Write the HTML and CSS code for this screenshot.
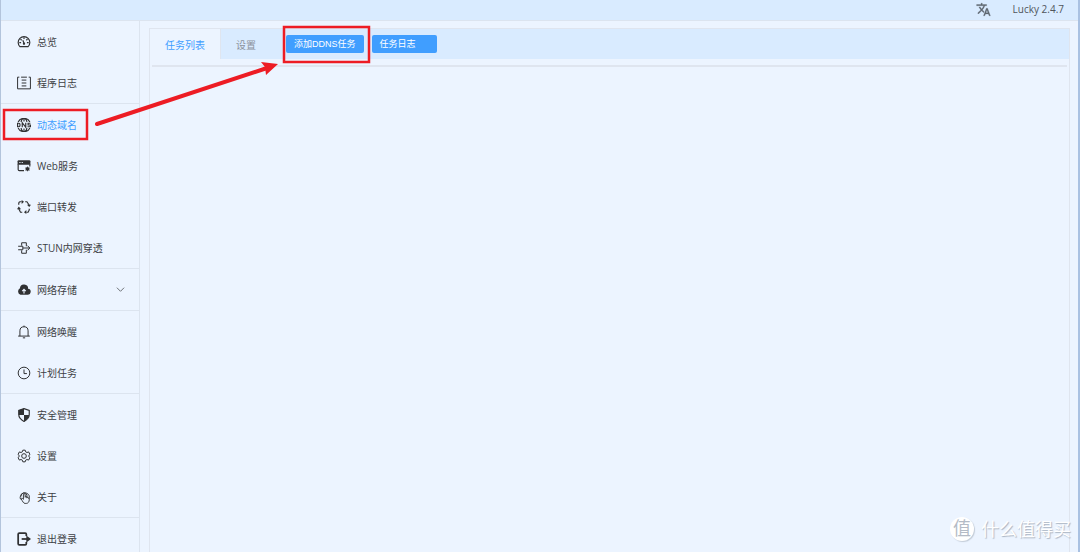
FILE: index.html
```html
<!DOCTYPE html>
<html lang="zh-CN">
<head>
    <meta charset="UTF-8">
    <meta name="viewport" content="width=device-width, initial-scale=1.0">
    <title>Lucky</title>
    <link rel="stylesheet" href="styles.css">
</head>
<body>
    <header class="topbar">
        <button class="lang-btn" type="button" aria-label="语言">
            <svg class="lang-icon" viewBox="0 0 24 24" fill="currentColor" stroke="currentColor" stroke-width=".5"><path d="M12.9 15.1l-2.6-2.5c1.8-1.9 3-4.2 3.8-6.6H17V4h-7V2H8v2H1v2h11.2c-.7 1.9-1.8 3.8-3.2 5.3-.9-1-1.7-2.1-2.3-3.3h-2c.7 1.6 1.7 3.2 3 4.6l-5.1 5L4 19l5-5 3.1 3.1.8-2zM18.5 10h-2L12 22h2l1.1-3h4.8l1.1 3h2l-4.5-12zm-2.6 7l1.6-4.3 1.6 4.3h-3.2z"/></svg>
        </button>
        <span class="version">Lucky 2.4.7</span>
    </header>

    <div class="layout">
        <nav class="sidebar">
            <ul class="menu">
                <li><a class="menu-item" href="#home">
                    <svg class="icon" viewBox="0 0 24 24" fill="none" stroke="currentColor" stroke-width="2"><path d="M5 20a10 10 0 1 1 14 0z"/><path d="M12 4v3M4 13h3M17 13h3M6 7l2 2M18 7l-2 2M10 9l2 5"/><circle cx="12" cy="15" r="1"/></svg>
                    总览</a></li>
                <li><a class="menu-item" href="#log">
                    <svg class="icon" viewBox="0 0 24 24" fill="none" stroke="currentColor" stroke-width="1.7"><path d="M4 2H1v20h22V2h-3"/><path d="M7 2h10M8 7h8M8 12h8M8 17h8"/></svg>
                    程序日志</a></li>
            </ul>
            <ul class="menu">
                <li><a class="menu-item active" href="#ddns">
                    <svg class="icon" viewBox="0 0 24 24" fill="none" stroke="currentColor" stroke-width="2"><path d="M2 7a11 11 0 0 1 20 0M2 17a11 11 0 0 0 20 0M12 1v5M12 18v5M7 7c0-2 1-4 3-6M17 7c0-2-1-4-3-6M7 17c0 2 1 4 3 6M17 17c0 2-1 4-3 6"/><path d="M1 9v6h2c3 0 3-6 0-6zM9 16V8l6 8V8M23 9h-4v3h4v3h-5"/></svg>
                    动态域名</a></li>
                <li><a class="menu-item" href="#web">
                    <svg class="icon" viewBox="0 0 24 24" fill="none" stroke="currentColor" stroke-width="2"><path d="M3 2h18a2 2 0 0 1 2 2v6H1V4a2 2 0 0 1 2-2z" fill="currentColor" stroke="none"/><path d="M2 9v9a2 2 0 0 0 2 2h8M22 9v4"/><path d="M4 6h2M8 6h2" stroke="#ecf4ff"/><circle cx="18" cy="17" r="3" fill="currentColor" stroke="none"/><path d="M18 13v8M14 17h8M15 14l6 6M21 14l-6 6" stroke-width="1.5"/></svg>
                    Web服务</a></li>
                <li><a class="menu-item" href="#forward">
                    <svg class="icon" viewBox="0 0 24 24" fill="none" stroke="currentColor" stroke-width="2"><path d="M8 3H5a3 3 0 0 0-2 3v2M14 3h3l4 6M21 15v2l-2 4h-3M9 21H6l-3-6"/><path d="M8 0l4 3-4 4zM17 8h7l-3 4zM16 17v7l-4-3zM0 16h7l-4-5z" fill="currentColor" stroke="none"/></svg>
                    端口转发</a></li>
                <li><a class="menu-item" href="#stun">
                    <svg class="icon" viewBox="0 0 24 24" fill="none" stroke="currentColor" stroke-width="1.7"><path d="M8 8V3h8v6M8 16v5h8v-6M2 9h8v6H2M10 12h12M18 8l4 4-4 4"/></svg>
                    STUN内网穿透</a></li>
            </ul>
            <ul class="menu">
                <li><a class="menu-item" href="#storage">
                    <svg class="icon" viewBox="0 0 24 24"><path d="M19 10A7 7 0 0 0 5 9a6 6 0 0 0 1 11h12a5 5 0 0 0 1-10z" fill="currentColor"/><path d="M12 18v-6M9 14l3-3 3 3" fill="none" stroke="#ecf4ff" stroke-width="2"/></svg>
                    网络存储
                    <svg class="chevron" viewBox="0 0 10 10" fill="none" stroke="currentColor"><path d="M1 3l4 4 4-4"/></svg></a></li>
            </ul>
            <ul class="menu">
                <li><a class="menu-item" href="#wol">
                    <svg class="icon" viewBox="0 0 24 24" fill="none" stroke="currentColor" stroke-width="1.7"><path d="M5 19v-9a7 7 0 0 1 14 0v9M2 19h20M12 1v2M10 22h4"/></svg>
                    网络唤醒</a></li>
                <li><a class="menu-item" href="#cron">
                    <svg class="icon" viewBox="0 0 24 24" fill="none" stroke="currentColor" stroke-width="1.7"><circle cx="12" cy="12" r="10"/><path d="M12 6v7h5"/></svg>
                    计划任务</a></li>
            </ul>
            <ul class="menu">
                <li><a class="menu-item" href="#security">
                    <svg class="icon" viewBox="0 0 24 24"><path d="M12 1l9 3v7c0 6-4 9-9 12-5-3-9-6-9-12V4z" fill="none" stroke="currentColor" stroke-width="2"/><path d="M12 1v11H3V4zM12 12h9c-1 5-4 8-9 11z" fill="currentColor"/></svg>
                    安全管理</a></li>
                <li><a class="menu-item" href="#settings">
                    <svg class="icon" viewBox="0 0 24 24" fill="none" stroke="currentColor" stroke-width="1.7"><path d="M10 2h4l1 3 2 1 3-1 2 4-2 3 2 3-2 4-3-1-2 1-1 3h-4l-1-3-2-1-3 1-2-4 2-3-2-3 2-4 3 1 2-1z"/><circle cx="12" cy="12" r="4"/></svg>
                    设置</a></li>
                <li><a class="menu-item" href="#about">
                    <svg class="icon" viewBox="0 0 24 24" fill="none" stroke="currentColor" stroke-width="1.6"><path d="M6 16a8 8 0 1 1 15-6v7c0 3-2 6-5 6h-2c-3 0-4-3-7-8 1-2 2-1 4 1V8c0-2 3-2 3 0v5"/><path d="M7 11a5 5 0 1 1 10-2v5M14 11c2-1 3 0 3 2 2-1 3 0 3 2"/></svg>
                    关于</a></li>
            </ul>
            <ul class="menu">
                <li><a class="menu-item" href="#logout">
                    <svg class="icon" viewBox="0 0 24 24" fill="none" stroke="currentColor" stroke-width="3"><path d="M16 7V4a2 2 0 0 0-2-2H4a2 2 0 0 0-2 2v16a2 2 0 0 0 2 2h10a2 2 0 0 0 2-2v-3"/><path d="M8 12h10"/><path d="M16 6l8 6-8 6z" fill="currentColor" stroke="none"/></svg>
                    退出登录</a></li>
            </ul>
        </nav>

        <main class="content">
            <section class="card">
                <div class="tabs">
                    <button class="tab selected" type="button">任务列表</button>
                    <button class="tab" type="button">设置</button>
                    <div class="actions">
                        <button class="btn" type="button">添加DDNS任务</button>
                        <button class="btn btn-log" type="button">任务日志</button>
                    </div>
                </div>
                <hr class="rule">
            </section>
        </main>
    </div>

    <!-- guide marks over the page -->
    <svg class="marks" width="380" height="150" viewBox="0 0 380 150" fill="none" stroke="#ed1c24">
        <rect x="4" y="110" width="83" height="29" stroke-width="2.5"/>
        <rect x="284" y="27" width="85" height="35" stroke-width="2.5"/>
        <path d="M97 124L267 68" stroke-width="4" stroke-linecap="round"/>
        <path d="M278 64l-17-2 4 5 1 8z" fill="#ed1c24" stroke="none"/>
    </svg>

    <div class="watermark">
        <span class="watermark-logo">值</span>
        <span>什么值得买</span>
    </div>
</body>
</html>
```
FILE: styles.css
```css
* {
    box-sizing: border-box;
}
body {
    margin: 0;
    height: 100vh;
    display: flex;
    flex-direction: column;
    overflow: hidden;
    position: relative;
    background-color: #ecf4ff;
    border-left: 1px solid #b3c4dc;
    border-right: 2px solid #a9c1e2;
    color: #3c3f44;
    font-family: "Open Sans", "Noto Sans CJK SC", sans-serif;
    font-size: 10px;
}
button {
    margin: 0;
    padding: 0;
    border: 0;
    background: none;
    font: inherit;
    color: inherit;
    cursor: pointer;
}

/* top bar */
.topbar {
    flex: none;
    height: 21px;
    display: flex;
    align-items: center;
    justify-content: flex-end;
    gap: 22px;
    padding: 0 14px 2px 0;
    background-color: #d9ebff;
    border-bottom: 1px solid #dce4ef;
}
.lang-btn {
    display: flex;
    color: #5f6670;
}
.lang-icon {
    width: 15px;
    height: 15px;
}
.version {
    color: #50555c;
}

.layout {
    flex: 1;
    min-height: 0;
    display: flex;
}

/* side menu */
.sidebar {
    flex: none;
    width: 139px;
    border-right: 1px solid #dce4ef;
}
.menu {
    margin: 0;
    padding: 0;
    list-style: none;
}
.menu + .menu {
    border-top: 1px solid #dce4ef;
}
.menu-item {
    display: flex;
    align-items: center;
    gap: 6px;
    height: 41px;
    padding: 0 14px 0 16px;
    color: #3c3f44;
    text-decoration: none;
}
.menu-item.active {
    color: #409eff;
}
.icon {
    width: 14px;
    height: 14px;
    color: #303133;
}
.chevron {
    width: 9px;
    height: 9px;
    margin-left: auto;
    color: #606266;
}

/* content */
.content {
    flex: 1;
    display: flex;
    padding: 7px 8px 0 9px;
}
.card {
    flex: 1;
    border: 1px solid #dfe5ef;
    border-bottom: 0;
}
.tabs {
    display: flex;
    height: 30px;
    background-color: #d9ebff;
}
.tab {
    padding: 0 15px;
    color: #8b929c;
}
.tab.selected {
    background-color: #ecf4ff;
    border-right: 1px solid #dfe5ef;
    color: #409eff;
}
.actions {
    display: flex;
    align-items: center;
    gap: 8px;
    margin-left: 15px;
}
.btn {
    height: 18px;
    padding: 0 8px;
    border-radius: 2px;
    background-color: #409eff;
    color: #fff;
    font-family: "Liberation Sans", "Noto Sans CJK SC", sans-serif;
    font-size: 9px;
    line-height: 18px;
}
.btn-log {
    width: 65px;
    text-align: left;
}
.rule {
    height: 2px;
    margin: 6px 2px 0;
    border: 0;
    background-color: #dfe5ef;
}

/* overlays */
.marks {
    position: absolute;
    top: 0;
    left: -1px;
    pointer-events: none;
}
.watermark {
    position: absolute;
    right: 7px;
    bottom: 10px;
    display: flex;
    align-items: center;
    gap: 7px;
    color: #fff;
    font-size: 18px;
    line-height: 26px;
    text-shadow: 1px 1px 1px #aab4c2;
}
.watermark-logo {
    width: 24px;
    height: 24px;
    border-radius: 50%;
    background-color: #fff;
    box-shadow: 1px 1px 1px #c3ccd8;
    color: #b4bbc6;
    line-height: 23px;
    text-align: center;
    text-shadow: none;
}
```
